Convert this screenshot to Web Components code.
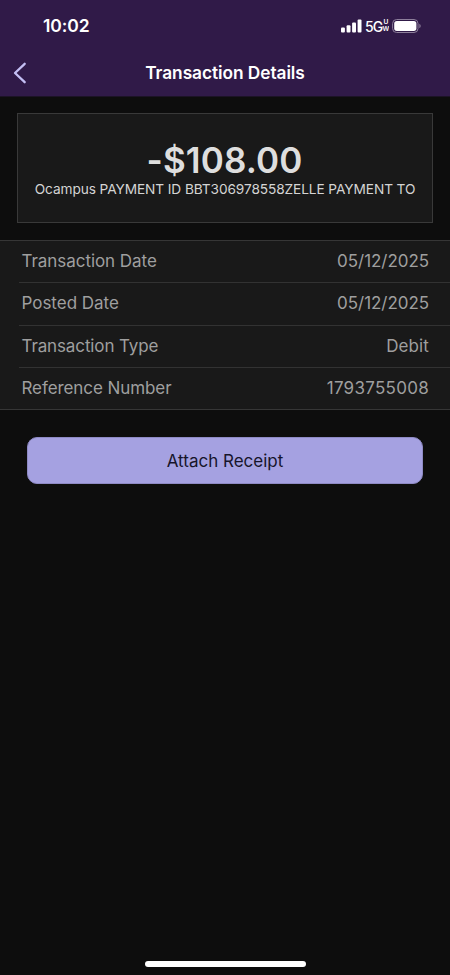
<!DOCTYPE html>
<html lang="en">
<head>
<meta charset="utf-8">
<title>Transaction Details</title>
<style>
html,body{margin:0;background:#0d0d0d}
body{width:450px;height:975px;overflow:hidden;font-family:Inter,"Liberation Sans",sans-serif;font-weight:400}
</style>
</head>
<body>
<bank-screen>
  <status-bar slot="top" time="10:02"></status-bar>
  <nav-header slot="top">Transaction Details</nav-header>
  <amount-card amount="-$108.00">Ocampus PAYMENT ID BBT306978558ZELLE PAYMENT TO</amount-card>
  <detail-list>
    <detail-row label="Transaction Date" style="--ls:-.05px;--vs:-.05px">05/12/2025</detail-row>
    <detail-row label="Posted Date" style="--ls:-.02px;--vs:-.05px">05/12/2025</detail-row>
    <detail-row label="Transaction Type" style="--ls:-.12px;--vs:.1px">Debit</detail-row>
    <detail-row label="Reference Number" style="--ls:-.08px;--vs:.28px">1793755008</detail-row>
  </detail-list>
  <action-button>Attach Receipt</action-button>
  <home-indicator slot="bottom"></home-indicator>
</bank-screen>
<script>
const define = (name, html) => customElements.define(name, class extends HTMLElement {
  constructor() {
    super();
    const t = document.createElement('template');
    t.innerHTML = html;
    this.attachShadow({mode: 'open'}).append(t.content.cloneNode(true));
  }
  connectedCallback() {
    this.shadowRoot.querySelectorAll('[data-attr]').forEach(n => n.textContent = this.getAttribute(n.dataset.attr));
  }
});

define('bank-screen', `<style>
:host{display:flex;flex-direction:column;width:450px;height:975px;background:#0d0d0d}
header{height:96px;background:#301a48;border-bottom:1px solid #1c1326;box-sizing:content-box}
main{flex:1;display:flex;flex-direction:column}
</style><header><slot name="top"></slot></header><main><slot></slot></main><slot name="bottom"></slot>`);

define('status-bar', `<style>
:host{display:flex;justify-content:space-between;height:52px;box-sizing:border-box;padding:0 28px 0 43px;color:#fff}
.time{font-size:17.5px;font-weight:600;line-height:52px;letter-spacing:-.05px}
.right{display:flex;align-items:center}
svg{display:block}
.net{font-size:14px;line-height:20px;letter-spacing:-.8px;font-weight:500;width:17.3px;margin-left:3.2px;padding-top:1px}
.uw{display:flex;flex-direction:column;font-size:6.6px;font-weight:600;line-height:7px;align-items:center;width:7px;overflow:hidden;letter-spacing:-.2px}
.uw span{height:7px}
.bat{margin-left:2.7px}
</style><span class="time" data-attr="time"></span>
<div class="right">
<svg width="21" height="14" viewBox="0 0 21 14" fill="#fff"><rect x="0" y="8.4" width="3.9" height="5" rx="1"/><rect x="5.6" y="6.2" width="3.9" height="7.2" rx="1"/><rect x="11.1" y="3.4" width="3.9" height="10" rx="1"/><rect x="16.6" y=".5" width="3.9" height="12.9" rx="1"/></svg>
<span class="net">5G</span><span class="uw"><span>U</span><span>W</span></span>
<svg class="bat" width="30" height="14" viewBox="0 0 30 14"><rect x=".6" y=".5" width="25.4" height="13" rx="4" fill="none" stroke="#8d7f9b"/><rect x="2.2" y="2.1" width="22.2" height="9.8" rx="2.6" fill="#fff"/><path d="M27.4 4.8c1.7.7 1.7 3.7 0 4.4z" fill="#8d7f9b"/></svg>
</div>`);

define('nav-header', `<style>
:host{display:grid;grid-template-columns:40px 1fr 40px;align-items:center;height:42px;color:#fff}
svg{display:block;margin-left:13px}
h1{margin:0;text-align:center;font-size:17.3px;font-weight:600;line-height:42px;letter-spacing:-.05px;white-space:nowrap}
</style><svg width="14" height="22" viewBox="0 0 14 22" fill="none" stroke="#c4bff4" stroke-width="2.3" stroke-linecap="round" stroke-linejoin="round"><path d="M11.7 1.8 2 11l9.7 9.2"/></svg><h1><slot></slot></h1>`);

define('amount-card', `<style>
:host{display:flex;flex-direction:column;align-items:center;box-sizing:border-box;height:110px;margin:16px 17px 0;padding-top:26px;background:#191919;border:1px solid #393939;color:#dedede;white-space:nowrap}
.amount{font-size:35px;font-weight:600;line-height:40px;padding-right:1px;letter-spacing:.1px}
.memo{font-size:13.7px;line-height:18px;letter-spacing:-.1px;color:#d4d4d4}
</style><span class="amount" data-attr="amount"></span><span class="memo"><slot></slot></span>`);

define('detail-list', `<style>
:host{display:block;margin-top:17px;background:#191919;border-top:1px solid #363636;border-bottom:1px solid #363636;height:168px}
</style><slot></slot>`);

define('detail-row', `<style>
:host{display:flex;justify-content:space-between;height:42.3px;box-sizing:border-box;margin-left:19px;padding:0 21px 0 2.5px;border-bottom:1px solid #323232;font-size:17px;line-height:41.4px;color:#9f9f9f;white-space:nowrap}
:host(:last-of-type){border-bottom:0}
.l{letter-spacing:var(--ls)}.v{letter-spacing:var(--vs)}
</style><span class="l" data-attr="label"></span><span class="v"><slot></slot></span>`);

define('action-button', `<style>
:host{display:block;margin:27px 27px 0}
button{display:block;width:100%;height:47px;border:1px solid #8e8ac4;border-radius:10px;background:#a5a1e1;color:#17152b;font:400 17px/46px Inter,"Liberation Sans",sans-serif;padding:0;text-align:center}
</style><button><slot></slot></button>`);

define('home-indicator', `<style>
:host{display:block;width:161px;height:6px;border-radius:3px;background:#fff;margin:0 auto 8px}
</style>`);
</script>
</body>
</html>
